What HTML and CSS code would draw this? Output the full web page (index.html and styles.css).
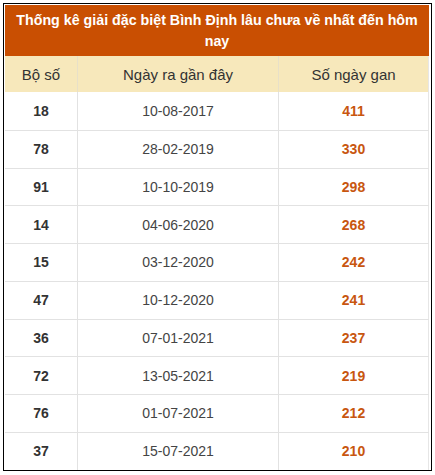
FILE: index.html
```html
<!DOCTYPE html>
<html lang="vi">
<head>
<meta charset="utf-8">
<link rel="stylesheet" href="styles.css">
</head>
<body>
<div class="box">
  <div class="title">Thống kê giải đặc biệt Bình Định lâu chưa về nhất đến hôm nay</div>
  <table class="tbl">
    <thead>
      <tr><th class="c1">Bộ số</th><th class="c2">Ngày ra gần đây</th><th class="c3">Số ngày gan</th></tr>
    </thead>
    <tbody>
      <tr><td class="num">18</td><td class="date">10-08-2017</td><td class="gan">411</td></tr>
      <tr><td class="num">78</td><td class="date">28-02-2019</td><td class="gan">330</td></tr>
      <tr><td class="num">91</td><td class="date">10-10-2019</td><td class="gan">298</td></tr>
      <tr><td class="num">14</td><td class="date">04-06-2020</td><td class="gan">268</td></tr>
      <tr><td class="num">15</td><td class="date">03-12-2020</td><td class="gan">242</td></tr>
      <tr><td class="num">47</td><td class="date">10-12-2020</td><td class="gan">241</td></tr>
      <tr><td class="num">36</td><td class="date">07-01-2021</td><td class="gan">237</td></tr>
      <tr><td class="num">72</td><td class="date">13-05-2021</td><td class="gan">219</td></tr>
      <tr><td class="num">76</td><td class="date">01-07-2021</td><td class="gan">212</td></tr>
      <tr><td class="num">37</td><td class="date">15-07-2021</td><td class="gan">210</td></tr>
    </tbody>
  </table>
</div>
</body>
</html>
```
FILE: styles.css
```css
html, body {
  margin: 0;
  padding: 0;
  background: #fff;
}
body {
  padding: 3px;
  font-family: "Liberation Sans", Arial, sans-serif;
}
.box {
  width: 429px;
  box-sizing: border-box;
  border: 1px solid #000;
  padding: 1px 2px 0 1px;
}
.title {
  background: #c94f02;
  color: #fff;
  font-weight: bold;
  font-size: 14.25px;
  line-height: 21px;
  text-align: center;
  padding: 5px 6px 4px;
}
.tbl {
  width: 100%;
  border-collapse: collapse;
  table-layout: fixed;
  border-right: 1px solid #e6e6e6;
}
.tbl th {
  background: #f7e8bb;
  color: #333;
  font-weight: normal;
  font-size: 15px;
  height: 36px;
  padding: 0;
  border-left: 1px solid #e8e0c8;
}
.tbl th:first-child, .tbl td:first-child { border-left: none; }
.c1 { width: 72px; }
.c2 { width: 200px; }
.tbl td {
  height: 36.75px;
  padding: 0;
  text-align: center;
  border-top: 1px solid #e2e2e2;
  border-left: 1px solid #e2e2e2;
  font-size: 14px;
}
.tbl tbody tr:first-child td { border-top: none; height: 37.75px; }
.num { font-weight: bold; color: #333; }
.date { color: #444; }
.gan { font-weight: bold; color: #c8560f; font-size: 16px; }
```
